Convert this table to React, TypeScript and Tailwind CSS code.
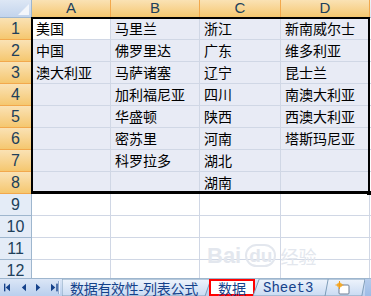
import React from 'react';

const cols = ['A', 'B', 'C', 'D'];
const colWidths = ['w-[79px]', 'w-[89px]', 'w-[81px]', 'w-[89px]'];

const data: string[][] = [
  ['美国', '马里兰', '浙江', '新南威尔士'],
  ['中国', '佛罗里达', '广东', '维多利亚'],
  ['澳大利亚', '马萨诸塞', '辽宁', '昆士兰'],
  ['', '加利福尼亚', '四川', '南澳大利亚'],
  ['', '华盛顿', '陕西', '西澳大利亚'],
  ['', '密苏里', '河南', '塔斯玛尼亚'],
  ['', '科罗拉多', '湖北', ''],
  ['', '', '湖南', ''],
  ['', '', '', ''],
  ['', '', '', ''],
  ['', '', '', ''],
  ['', '', '', ''],
];

const cjk = "font-['Noto_Sans_CJK_SC','Noto_Sans',sans-serif]";

function NavButtons() {
  return (
    <div className="w-[58px] shrink-0 flex items-center gap-[10px] pl-[4px] text-[#15428b]">
      <svg width="8" height="9" viewBox="0 0 8 9"><rect x="0" y="0" width="1.6" height="9" fill="currentColor" /><path d="M7 0 L2 4.5 L7 9 Z" fill="currentColor" /></svg>
      <svg width="6" height="9" viewBox="0 0 6 9"><path d="M6 0 L1 4.5 L6 9 Z" fill="currentColor" /></svg>
      <svg width="6" height="9" viewBox="0 0 6 9"><path d="M0 0 L5 4.5 L0 9 Z" fill="currentColor" /></svg>
      <svg width="8" height="9" viewBox="0 0 8 9"><path d="M0 0 L5 4.5 L0 9 Z" fill="currentColor" /><rect x="6.2" y="0" width="1.6" height="9" fill="currentColor" /></svg>
    </div>
  );
}

function TabShape({ slantLeft }: { slantLeft: boolean }) {
  return (
    <svg className="absolute inset-0 w-full h-full" viewBox="0 0 100 18" preserveAspectRatio="none">
      <defs>
        <linearGradient id="tabg" x1="0" y1="0" x2="0" y2="1">
          <stop offset="0" stopColor="#eef4fc" />
          <stop offset="1" stopColor="#c9daf2" />
        </linearGradient>
      </defs>
      <path
        d={slantLeft ? 'M8 0 L100 0 L92 18 L0 18 Z' : 'M0 0 L100 0 L96 18 L0 18 Z'}
        fill="url(#tabg)"
        stroke="#7f9db9"
        strokeWidth="1"
        vectorEffect="non-scaling-stroke"
      />
    </svg>
  );
}

export default function App() {
  return (
    <div className="w-[371px] h-[296px] overflow-hidden bg-white relative flex flex-col">
      <div className="h-[278px] overflow-hidden relative">
        {/* header row */}
        <div className="flex h-[18px]">
          <div className="w-[32px] shrink-0 bg-gradient-to-b from-[#dde7f5] to-[#c3d4ec] border-r border-b border-[#9eb6ce] relative">
            <div className="absolute right-[2px] bottom-[2px] w-0 h-0 border-l-[11px] border-l-transparent border-b-[11px] border-b-[#f3f6fb]" />
          </div>
          {cols.map((c, i) => (
            <div
              key={c}
              className={`${colWidths[i]} shrink-0 flex items-center justify-center bg-gradient-to-b from-[#fae2b4] to-[#f5c76e] border-r border-b border-[#f2a84c] text-[#20405a] text-[15px] font-['Liberation_Sans',sans-serif]`}
            >
              {c}
            </div>
          ))}
          <div className="flex-1 bg-gradient-to-b from-[#eef3fa] to-[#dfe8f5] border-b border-[#9eb6ce]" />
        </div>

        {data.map((row, r) => {
          const inSel = r < 8;
          return (
            <div key={r} className="flex h-[22px]">
              <div
                className={`w-[32px] shrink-0 flex items-center justify-center border-r border-b text-[16px] text-[#20405a] font-['Liberation_Sans',sans-serif] ${
                  inSel
                    ? 'bg-gradient-to-b from-[#fae2b4] to-[#f5c76e] border-[#f2a84c]'
                    : 'bg-[#e4ecf7] border-[#9eb6ce]'
                }`}
              >
                {r + 1}
              </div>
              {row.map((v, i) => (
                <div
                  key={i}
                  className={`${colWidths[i]} shrink-0 flex items-center pl-[4px] border-r border-b border-[#d0d7e5] text-[14px] text-black whitespace-nowrap overflow-hidden ${cjk} ${
                    inSel && !(r === 0 && i === 0) ? 'bg-[#e8ebf5]' : 'bg-white'
                  }`}
                >
                  {v}
                </div>
              ))}
              <div className="flex-1 border-b border-[#d0d7e5] bg-white" />
            </div>
          );
        })}

        {/* selection border */}
        <div className="absolute left-[31px] top-[17px] w-[339px] h-[177px] border-2 border-black border-b-[3px] pointer-events-none" />
        <div className="absolute left-[367px] top-[191px] w-[4px] h-[4px] bg-black" />

        {/* watermark */}
        <div className="absolute left-[207px] top-[244px] flex items-center gap-[4px] text-[#e3e7ee] pointer-events-none">
          <span className="text-[22px] font-bold font-['Liberation_Sans',sans-serif] leading-none">Bai</span>
          <span className="text-[19px] font-bold leading-none font-['Liberation_Sans',sans-serif] rounded-full border-2 border-[#e3e7ee] px-[2px]">du</span>
          <span className={`text-[18px] leading-none ${cjk}`}>经验</span>
        </div>
      </div>

      {/* sheet tab bar */}
      <div className="h-[18px] flex items-stretch bg-gradient-to-b from-[#dbe6f6] to-[#b9cfee] border-t border-[#9eb6ce]">
        <NavButtons />
        <div className="w-[2px] my-[2px] border-l border-[#8fa9cf] bg-white/60" />
        <div className="relative w-[149px] ml-[2px] flex items-center pl-[8px]">
          <TabShape slantLeft={false} />
          <span className={`relative text-[14px] leading-none text-[#15428b] whitespace-nowrap tracking-[-0.3px] ${cjk}`}>数据有效性-列表公式</span>
        </div>
        <div className="relative w-[46px] -ml-[2px] flex items-center justify-center border-2 border-[#ff0000] bg-white">
          <span className={`text-[14px] leading-none text-[#15428b] ${cjk}`}>数据</span>
        </div>
        <div className="relative w-[78px] -ml-[2px] flex items-center pl-[10px]">
          <TabShape slantLeft={true} />
          <span className="relative text-[14px] leading-none text-[#15428b] font-['Liberation_Mono',monospace]">Sheet3</span>
        </div>
        <div className="relative w-[40px] -ml-[6px] flex items-center pl-[10px]">
          <TabShape slantLeft={true} />
          <svg className="relative" width="16" height="14" viewBox="0 0 16 14">
            <rect x="4" y="4" width="10" height="9" rx="1" fill="#ffffff" stroke="#6f7f95" strokeWidth="1" />
            <circle cx="4.5" cy="4" r="2.5" fill="#f6b73c" />
            <path d="M4.5 0 V8 M0.5 4 H8.5" stroke="#f29b1d" strokeWidth="1" />
          </svg>
        </div>
        <div className="flex-1 bg-gradient-to-b from-[#b5ccec] to-[#9dbce6]" />
      </div>
    </div>
  );
}
